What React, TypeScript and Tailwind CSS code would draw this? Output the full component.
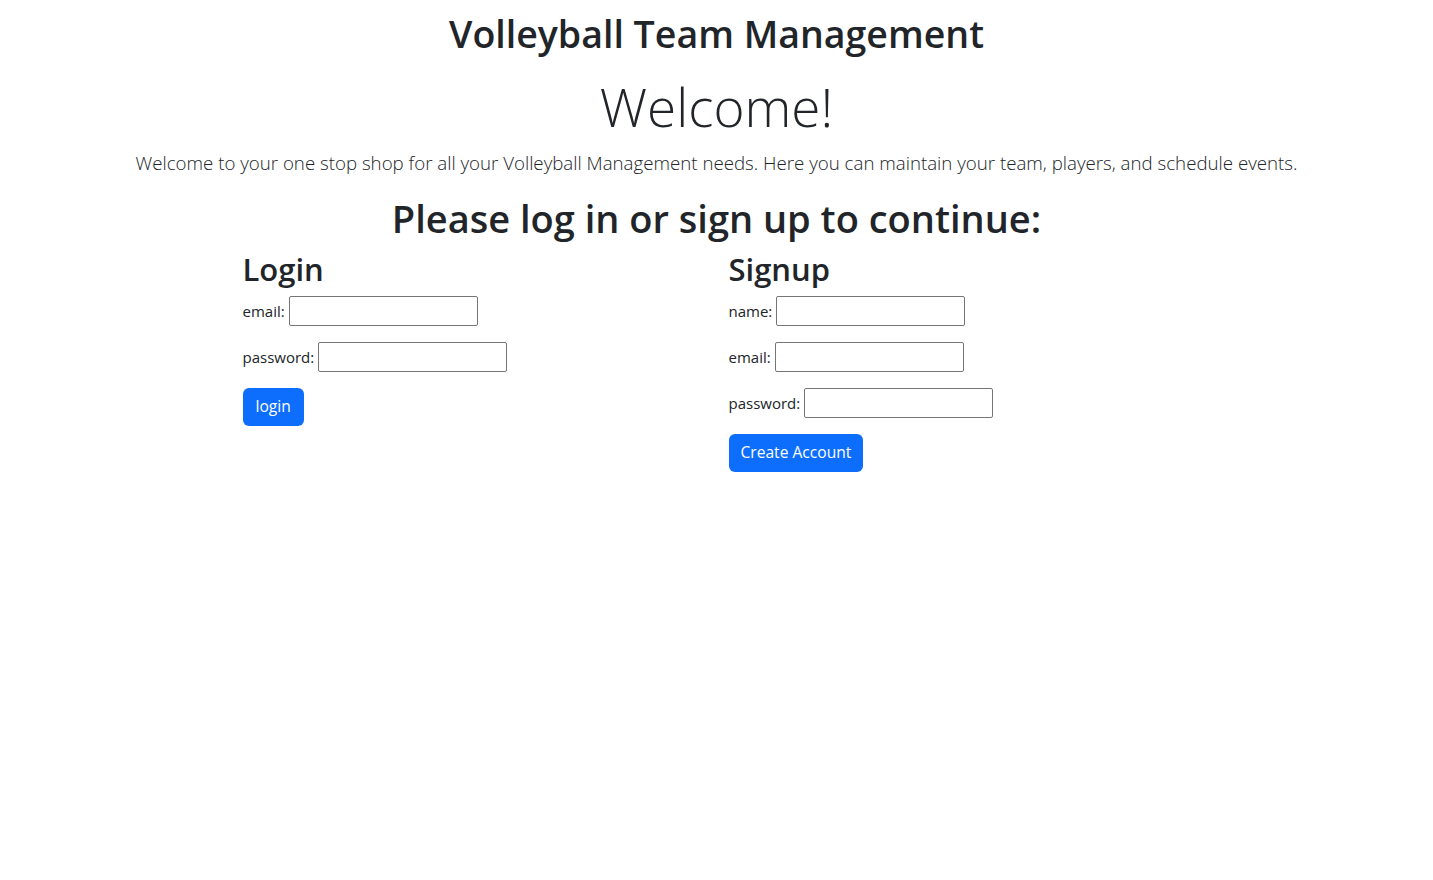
const inputCls =
  "h-[30px] w-[189px] rounded-[2px] border border-[#767676] bg-white px-1 text-base outline-none";

const Field = ({ label }: { label: string }) => (
  <div className="mb-4 flex items-center gap-1">
    <label className="text-[15px] leading-6">{label}</label>
    <input className={inputCls} type="text" />
  </div>
);

const App = () => {
  return (
    <div
      className="min-h-screen w-full bg-white text-[#212529]"
      style={{ fontFamily: '"Open Sans", "Noto Sans", sans-serif' }}
    >
      <h1 className="pt-[10px] text-center text-[37.5px] font-semibold leading-[48px]">
        Volleyball Team Management
      </h1>
      <div className="mt-[18px] text-center text-[53px] font-light leading-[62px]">
        Welcome!
      </div>
      <p className="mt-[10px] text-center text-[18.7px] font-light leading-[30px]">
        Welcome to your one stop shop for all your Volleyball Management needs.
        Here you can maintain your team, players, and schedule events.
      </p>
      <h1 className="mt-[16px] text-center text-[38px] font-semibold leading-[48px]">
        Please log in or sign up to continue:
      </h1>
      <div className="mt-[8px] flex justify-center">
        <div className="w-[486px] px-3">
          <h2 className="mb-[8px] text-[31px] font-semibold leading-[38px]">Login</h2>
          <Field label="email:" />
          <Field label="password:" />
          <button className="h-[38px] rounded-[6px] bg-[#0d6efd] px-[13px] text-[15.6px] text-white">
            login
          </button>
        </div>
        <div className="w-[486px] px-3">
          <h2 className="mb-[8px] text-[31px] font-semibold leading-[38px]">Signup</h2>
          <Field label="name:" />
          <Field label="email:" />
          <Field label="password:" />
          <button className="h-[38px] rounded-[6px] bg-[#0d6efd] px-3 text-[15.6px] text-white">
            Create Account
          </button>
        </div>
      </div>
    </div>
  );
};

export default App;
